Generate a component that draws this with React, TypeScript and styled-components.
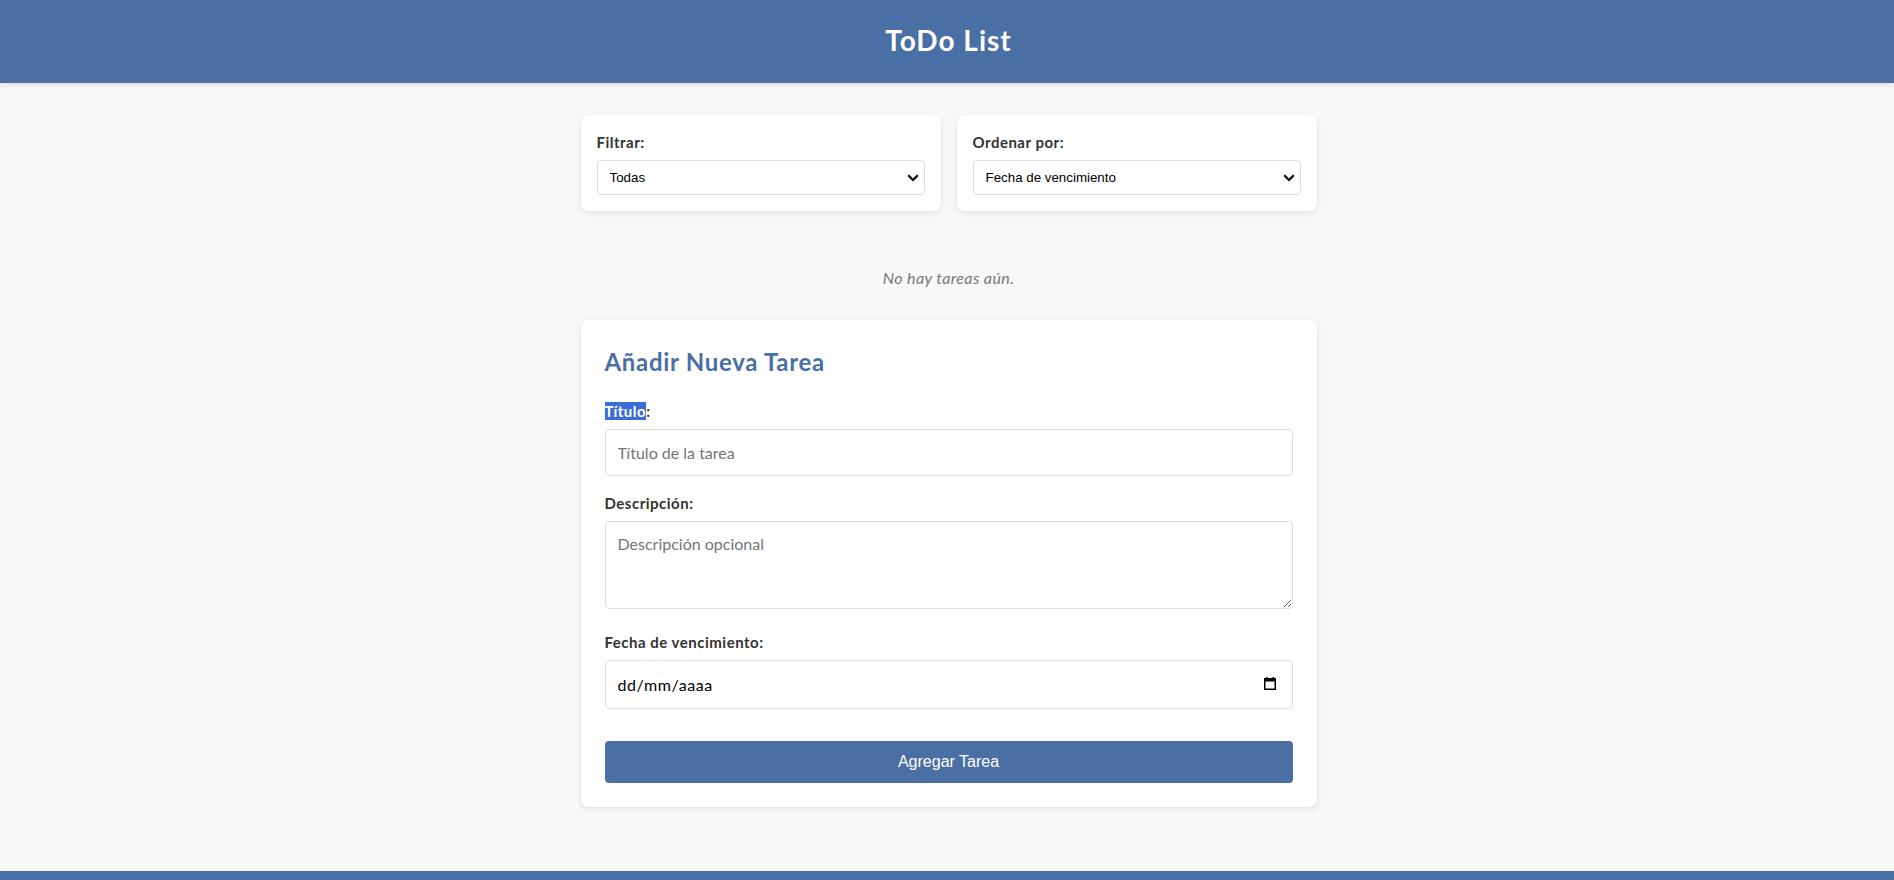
import React, { useState } from "react";
import styled, { createGlobalStyle } from "styled-components";

const GlobalStyle = createGlobalStyle`
  html, body {
    margin: 0;
    padding: 0;
    background: #f8f8f8;
  }
  body {
    font-family: "Lato", "Open Sans", sans-serif;
    color: #333;
  }
  * { box-sizing: border-box; }
`;

const Page = styled.div`
  min-height: 100vh;
  display: flex;
  flex-direction: column;
`;

const Header = styled.header`
  background: #4a6fa5;
  color: #fff;
  padding: 19px 0 22px 3px;
  text-align: center;
  box-shadow: 0 2px 5px rgba(0, 0, 0, 0.12);
`;

const Title = styled.h1`
  margin: 0;
  font-size: 28px;
  line-height: 42px;
  font-weight: 700;
  letter-spacing: 1px;
`;

const Main = styled.main`
  width: 736px;
  margin: 0 auto;
  padding: 32px 0 64px;
  position: relative;
  left: 1.5px;
`;

const FilterRow = styled.section`
  display: grid;
  grid-template-columns: 1fr 1fr;
  gap: 16px;
  margin-bottom: 24px;
`;

const Card = styled.div<{ $pad: number }>`
  background: #fff;
  border-radius: 8px;
  padding: ${(p) => p.$pad}px;
  box-shadow: 0 2px 6px rgba(0, 0, 0, 0.1);
`;

const Label = styled.label`
  display: block;
  font-size: 15px;
  line-height: 22px;
  font-weight: 700;
  letter-spacing: 0.5px;
  color: #333;
  margin-bottom: 7px;
`;

const FieldWrap = styled.div`
  position: relative;
`;

const Select = styled.select`
  display: block;
  width: 100%;
  height: 35px;
  padding: 8px 24px 8px 12px;
  border: 1px solid #ddd;
  border-radius: 4px;
  background: #fff;
  appearance: none;
  font-family: "Liberation Sans", Arial, sans-serif;
  font-size: 13.33px;
  color: #000;
`;

const Chevron = styled.svg`
  position: absolute;
  right: 6px;
  top: 14px;
  width: 12px;
  height: 8px;
  pointer-events: none;
`;

const Empty = styled.p`
  margin: 0;
  padding: 31px 0 30px;
  text-align: center;
  font-style: italic;
  font-size: 16px;
  line-height: 24px;
  letter-spacing: 0.4px;
  color: #777;
`;

const FormTitle = styled.h2`
  margin: 0 0 20px;
  font-size: 24px;
  line-height: 36px;
  font-weight: 700;
  letter-spacing: 0.7px;
  color: #4a6fa5;
`;

const Group = styled.div`
  display: flex;
  flex-direction: column;
  margin-bottom: 16px;
`;

const Selected = styled.span`
  background: #3a6ed6;
  color: #fff;
`;

const TextInput = styled.input`
  display: block;
  width: 100%;
  height: 47px;
  padding: 12px;
  border: 1px solid #ddd;
  border-radius: 4px;
  font-family: "Lato", "Open Sans", sans-serif;
  font-size: 16px;
  color: #000;
  &::placeholder { color: #757575; }
`;

const DateInput = styled(TextInput)`
  height: 49px;
  letter-spacing: 0.6px;
  &::placeholder { color: #000; }
`;

const CalendarIcon = styled.svg`
  position: absolute;
  right: 17px;
  top: 17px;
  width: 12px;
  height: 13px;
  pointer-events: none;
`;

const TextArea = styled.textarea`
  display: block;
  width: 100%;
  height: 88px;
  padding: 12px;
  margin-bottom: 6px;
  border: 1px solid #ddd;
  border-radius: 4px;
  font-family: "Lato", "Open Sans", sans-serif;
  font-size: 16px;
  resize: vertical;
  &::placeholder { color: #757575; }
`;

const SubmitButton = styled.button`
  display: block;
  width: 100%;
  height: 42px;
  margin-top: 32px;
  padding: 12px;
  border: none;
  border-radius: 4px;
  background: #4a6fa5;
  color: #fff;
  font-family: "Liberation Sans", Arial, sans-serif;
  font-size: 16px;
  cursor: pointer;
`;

const Footer = styled.footer`
  background: #4a6fa5;
  height: 60px;
`;

function ChevronDown() {
  return (
    <Chevron viewBox="0 0 12 8" aria-hidden="true">
      <polyline points="1.2,1.2 6,6 10.8,1.2" fill="none" stroke="#000" strokeWidth="2.2" />
    </Chevron>
  );
}

export default function App() {
  const [filter, setFilter] = useState("todas");
  const [order, setOrder] = useState("fecha");
  return (
    <Page>
      <GlobalStyle />
      <Header>
        <Title>ToDo List</Title>
      </Header>
      <Main>
        <FilterRow>
          <Card $pad={16}>
            <Label htmlFor="filter">Filtrar:</Label>
            <FieldWrap>
              <Select id="filter" value={filter} onChange={(e) => setFilter(e.target.value)}>
                <option value="todas">Todas</option>
                <option value="pendientes">Pendientes</option>
                <option value="completadas">Completadas</option>
              </Select>
              <ChevronDown />
            </FieldWrap>
          </Card>
          <Card $pad={16}>
            <Label htmlFor="order">Ordenar por:</Label>
            <FieldWrap>
              <Select id="order" value={order} onChange={(e) => setOrder(e.target.value)}>
                <option value="fecha">Fecha de vencimiento</option>
                <option value="titulo">Título</option>
                <option value="creacion">Fecha de creación</option>
              </Select>
              <ChevronDown />
            </FieldWrap>
          </Card>
        </FilterRow>
        <Empty>No hay tareas aún.</Empty>
        <Card $pad={24}>
          <FormTitle>Añadir Nueva Tarea</FormTitle>
          <Group>
            <Label htmlFor="title">
              <Selected>Título</Selected>:
            </Label>
            <TextInput id="title" type="text" placeholder="Título de la tarea" />
          </Group>
          <Group>
            <Label htmlFor="desc">Descripción:</Label>
            <TextArea id="desc" placeholder="Descripción opcional" />
          </Group>
          <Group>
            <Label htmlFor="due">Fecha de vencimiento:</Label>
            <FieldWrap>
              <DateInput id="due" type="text" placeholder="dd/mm/aaaa" />
              <CalendarIcon viewBox="0 0 12 13" aria-hidden="true">
                <rect x="0.75" y="1.75" width="10.5" height="10.5" fill="none" stroke="#000" strokeWidth="1.5" />
                <rect x="0" y="1" width="12" height="3.5" fill="#000" />
                <rect x="2" y="0" width="1.5" height="2" fill="#000" />
                <rect x="8.5" y="0" width="1.5" height="2" fill="#000" />
              </CalendarIcon>
            </FieldWrap>
          </Group>
          <SubmitButton type="button">Agregar Tarea</SubmitButton>
        </Card>
      </Main>
      <Footer />
    </Page>
  );
}
